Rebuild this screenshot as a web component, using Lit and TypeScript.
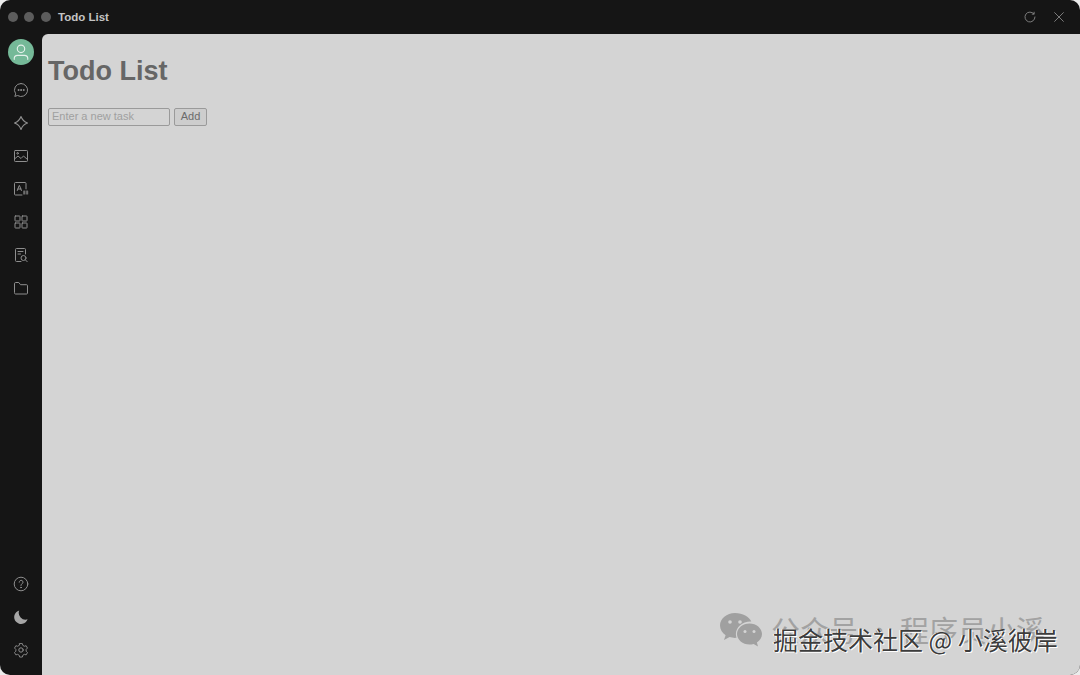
import { LitElement, html, css, svg } from "lit";
import { customElement } from "lit/decorators.js";

const ic = (body: unknown, size = 16, vb = 16) => html`<svg width=${size} height=${size} viewBox="0 0 ${vb} ${vb}" fill="none" stroke="currentColor" stroke-width="1" stroke-linecap="round" stroke-linejoin="round">${body}</svg>`;

const topIcons = [
  svg`<path d="M8 1.500a6.500 6.500 0 1 1-3.400 12L1.800 14.400l.9-2.600A6.500 6.500 0 0 1 8 1.500z"/><circle cx="5.400" cy="8" r=".5" fill="currentColor"/><circle cx="8" cy="8" r=".5" fill="currentColor"/><circle cx="10.600" cy="8" r=".5" fill="currentColor"/>`,
  svg`<path d="M8 1.500Q9.700 6.300 14.500 8 9.700 9.700 8 14.500 6.300 9.700 1.500 8 6.300 6.300 8 1.500z" stroke-width="1.100"/>`,
  svg`<rect x="1.500" y="2.500" width="13" height="11" rx=".8"/><circle cx="4.600" cy="5.300" r=".8"/><path d="M1.500 11l3.500-3 3 2.500 2.500-2.500 4 3.500"/>`,
  svg`<path d="M9 14H2.500a1 1 0 0 1-1-1V2.500a1 1 0 0 1 1-1H12a1 1 0 0 1 1 1V8"/><path d="M4.300 9.500 6.200 4.500h.3l1.900 5M5 8h3"/><rect x="10.200" y="9.500" width="5" height="4" rx=".5" fill="#6e6e6e" stroke="none"/><path d="M12.700 8.500v6" stroke="#151515" stroke-width=".7"/>`,
  svg`<rect x="2" y="2" width="5" height="5" rx=".5"/><rect x="9" y="2" width="5" height="5" rx=".5"/><rect x="2" y="9" width="5" height="5" rx=".5"/><rect x="9" y="9" width="5" height="5" rx=".5"/>`,
  svg`<path d="M8 14.500H3.500a1 1 0 0 1-1-1v-11a1 1 0 0 1 1-1h8a1 1 0 0 1 1 1V7"/><path d="M5 4.500h5M5 7h2.500"/><circle cx="10.500" cy="11" r="2.500"/><path d="m12.400 12.900 1.800 1.800"/>`,
  svg`<path d="M1.500 3.500a1 1 0 0 1 1-1h3.300l1.700 2.200h6a1 1 0 0 1 1 1v7.300a1 1 0 0 1-1 1h-11a1 1 0 0 1-1-1z"/>`,
];

const bottomIcons = [
  svg`<circle cx="8" cy="8" r="6.800"/><path d="M6.200 6.200a1.900 1.900 0 1 1 2.900 1.600c-.7.400-1.100.8-1.100 1.700"/><circle cx="8" cy="11.500" r=".4" fill="currentColor"/>`,
  svg`<path d="M6.200 1.400a6.900 6.900 0 1 0 8.400 8.900A6.800 6.800 0 0 1 6.200 1.400z" fill="#a6a6a6" stroke="none"/>`,
  svg`<path d="M6.500 1.500h3l.5 2 1.700 1 2-.6 1.500 2.600-1.500 1.500v2l1.500 1.500-1.500 2.600-2-.6-1.700 1-.5 2h-3l-.5-2-1.700-1-2 .6L.8 11.500 2.300 10V8L.8 6.500l1.500-2.600 2 .6 1.700-1z" transform="translate(.8 .2) scale(.9)"/><circle cx="8" cy="8" r="2.200"/>`,
];

@customElement("app-root")
export class AppRoot extends LitElement {
  static styles = css`
    :host {
      display: block;
      width: 1080px;
      height: 675px;
      background: #ececec;
      font-family: "Liberation Sans", Arial, sans-serif;
      overflow: hidden;
    }
    .win {
      width: 100%;
      height: 100%;
      display: flex;
      flex-direction: column;
      background: #151515;
      border-radius: 10px;
      overflow: hidden;
    }
    .bar {
      height: 34px;
      flex: none;
      display: flex;
      align-items: center;
      padding: 0 14px 0 7.500px;
    }
    .dots { display: flex; gap: 6.500px; }
    .dot { width: 10px; height: 10px; border-radius: 50%; background: #5c5c5c; }
    .title { margin-left: 7.500px; font-size: 11.500px; font-weight: 700; color: #c4c4c4; }
    .actions { margin-left: auto; display: flex; gap: 15px; color: #8a8a8a; }
    .actions svg { display: block; }
    .body { flex: 1; display: flex; min-height: 0; }
    .side {
      width: 42px;
      flex: none;
      display: flex;
      flex-direction: column;
      align-items: center;
      padding: 5px 0 17px;
      box-sizing: border-box;
      color: #8e8e8e;
    }
    .avatar {
      width: 26px;
      height: 26px;
      border-radius: 50%;
      background: #75b998;
      color: #e4f0ea;
      display: flex;
      align-items: center;
      justify-content: center;
      margin-bottom: 17px;
    }
    .nav { display: flex; flex-direction: column; gap: 17px; }
    .nav svg { display: block; }
    .spacer { flex: 1; }
    .main {
      position: relative;
      flex: 1;
      background: #d4d4d4;
      border-top-left-radius: 6px;
      padding: 0 6px;
    }
    h1 {
      margin: 21px 0 20px;
      font-size: 27px;
      line-height: 33px;
      font-weight: 700;
      color: #666;
    }
    .row { display: flex; gap: 4px; align-items: center; }
    .input {
      width: 122px;
      height: 18px;
      box-sizing: border-box;
      border: 1px solid #9a9a9a;
      border-radius: 2px;
      padding: 0 3px;
      font-size: 11px;
      line-height: 15px;
      color: #a0a0a0;
    }
    .btn {
      width: 33px;
      height: 18px;
      box-sizing: border-box;
      border: 1px solid #9a9a9a;
      border-radius: 2px;
      background: #cdcdcd;
      font-size: 11px;
      line-height: 15px;
      text-align: center;
      color: #6b6b6b;
    }
    .wm { position: absolute; left: 0; top: 0; width: 100%; height: 100%; pointer-events: none; }
    .wechat { position: absolute; left: 677px; top: 578px; }
    .wm1 {
      position: absolute;
      left: 729px;
      top: 577px;
      font-family: "Noto Sans CJK SC", sans-serif;
      font-size: 29px;
      line-height: 36px;
      color: #a2a2a2;
      white-space: nowrap;
    }
    .wm2 {
      position: absolute;
      left: 731px;
      top: 588px;
      font-family: "Noto Sans CJK SC", sans-serif;
      font-size: 25px;
      line-height: 34px;
      color: #3c3c3c;
      text-shadow: 1px 1px 0 #fff, -1px 0 0 #fff;
      white-space: nowrap;
    }
  `;

  render() {
    return html`<div class="win">
      <div class="bar">
        <div class="dots"><span class="dot"></span><span class="dot"></span><span class="dot"></span></div>
        <div class="title">Todo List</div>
        <div class="actions">
          ${ic(svg`<path d="M12.500 4.500A5.700 5.700 0 1 0 13.700 8"/><path d="M12.700 2.500v2.200h-2.200"/>`, 14)}
          ${ic(svg`<path d="m3 3 10 10M13 3 3 13"/>`, 14)}
        </div>
      </div>
      <div class="body">
        <nav class="side">
          <div class="avatar">${ic(svg`<circle cx="8" cy="5.200" r="3.300"/><path d="M2 14.500v-.7c0-1.800 1.400-2.800 3-2.800h6c1.600 0 3 1 3 2.800v.7"/>`, 18)}</div>
          <div class="nav">${topIcons.map((i) => ic(i))}</div>
          <div class="spacer"></div>
          <div class="nav">${bottomIcons.map((i) => ic(i))}</div>
        </nav>
        <main class="main">
          <h1>Todo List</h1>
          <div class="row">
            <div class="input">Enter a new task</div>
            <div class="btn">Add</div>
          </div>
          <div class="wm">
            <svg class="wechat" width="44" height="36" viewBox="0 0 44 36" fill="#a0a0a0">
              <path d="M16 1C7.700 1 1 6.600 1 13.500c0 3.900 2.200 7.400 5.600 9.700L5 28l5.600-2.900c1.700.5 3.500.8 5.400.8.500 0 1 0 1.500-.1-.4-1.200-.6-2.400-.6-3.700 0-7 6.500-12.600 14.500-12.600l.9.100C30.300 4.600 23.800 1 16 1z"/>
              <path d="M43 22c0-5.800-5.700-10.500-12.500-10.500S18 16.200 18 22s5.700 10.500 12.500 10.500c1.400 0 2.800-.2 4.100-.6L39 34.500l-1.100-4C41 28.500 43 25.500 43 22z"/>
              <g fill="#d4d4d4"><circle cx="11" cy="10" r="1.800"/><circle cx="21" cy="10" r="1.800"/><circle cx="26" cy="19.500" r="1.500"/><circle cx="35" cy="19.500" r="1.500"/></g>
            </svg>
            <div class="wm1">公众号 · 程序员小溪</div>
            <div class="wm2">掘金技术社区 @ 小溪彼岸</div>
          </div>
        </main>
      </div>
    </div>`;
  }
}
